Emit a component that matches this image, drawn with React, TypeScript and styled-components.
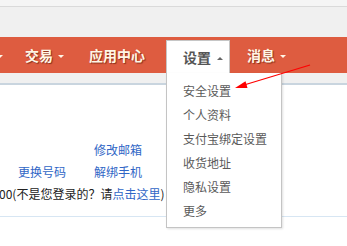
import styled, { createGlobalStyle } from "styled-components";

const GlobalStyle = createGlobalStyle`
  html, body {
    margin: 0;
    padding: 0;
    background: #ffffff;
    font-family: "Noto Sans CJK SC", "Noto Sans", sans-serif;
    overflow: hidden;
  }
`;

const Page = styled.div`
  position: relative;
  width: 347px;
  height: 246px;
  overflow: hidden;
`;

const TopStrip = styled.div`
  height: 6px;
  background: #f5f5f5;
  border-bottom: 1px solid #dadada;
`;

const HeaderSpace = styled.div`
  height: 30px;
  background: #f0f0f0;
`;

const NavBar = styled.nav`
  display: flex;
  align-items: stretch;
  height: 36px;
  background: #de5c40;
`;

const NavItem = styled.div<{ $ml: number }>`
  display: flex;
  align-items: center;
  margin-left: ${({ $ml }) => $ml}px;
  font-size: 14px;
  font-weight: bold;
  line-height: 16px;
  color: #fff6e6;
  text-shadow: 1px 1px 1px rgba(110, 35, 15, 0.75);
  white-space: nowrap;
`;

const Caret = styled.span<{ $up?: boolean; $color: string }>`
  display: inline-block;
  width: 0;
  height: 0;
  margin-left: ${({ $up }) => ($up ? 6 : 5)}px;
  margin-top: 2px;
  border-left: 3px solid transparent;
  border-right: 3px solid transparent;
  ${({ $up, $color }) =>
    $up
      ? `border-bottom: 3px solid ${$color};`
      : `border-top: 3px solid ${$color};`}
`;

const ActiveTab = styled.div<{ $ml: number }>`
  position: relative;
  box-sizing: border-box;
  display: flex;
  align-items: center;
  margin-top: 3px;
  margin-left: ${({ $ml }) => $ml}px;
  height: 33px;
  padding: 0 6px 0 16px;
  background: #ffffff;
  border: 1px solid #c6c6c6;
  border-bottom: none;
  font-size: 14px;
  font-weight: bold;
  line-height: 16px;
  color: #555555;
  white-space: nowrap;
  z-index: 2;
`;

const Dropdown = styled.ul`
  position: absolute;
  top: 100%;
  left: -1px;
  box-sizing: border-box;
  width: 116px;
  margin: 0;
  padding: 6px 0 4px 16px;
  list-style: none;
  background: #ffffff;
  border: 1px solid #c4c4c4;
  border-top: none;
  box-shadow: 1px 1px 2px rgba(0, 0, 0, 0.12);
`;

const DropdownItem = styled.li`
  font-size: 12px;
  font-weight: normal;
  line-height: 24px;
  color: #5a5a5a;
`;

const SubStrip = styled.div`
  height: 10px;
  background: #f0f0f0;
  border-bottom: 2px solid #c9d5df;
`;

const Content = styled.section`
  display: grid;
  grid-template-columns: 76px auto;
  padding: 54px 0 11px 18px;
  border-bottom: 1px solid #d7e6f3;
  font-size: 12px;
  line-height: 22px;
  color: #222222;
`;

const Link = styled.a`
  color: #3066c6;
  text-decoration: none;
`;

const Note = styled.div`
  grid-column: 1 / 3;
  margin-left: -19px;
  white-space: nowrap;
`;

const ArrowLayer = styled.svg`
  position: absolute;
  top: 0;
  left: 0;
  pointer-events: none;
  z-index: 5;
`;

const menu = ["安全设置", "个人资料", "支付宝绑定设置", "收货地址", "隐私设置", "更多"];

export default function App() {
  return (
    <Page>
      <GlobalStyle />
      <TopStrip />
      <HeaderSpace />
      <NavBar>
        <NavItem $ml={-8}>
          <Caret $color="#fff6e6" />
        </NavItem>
        <NavItem $ml={22}>
          交易
          <Caret $color="#fff6e6" />
        </NavItem>
        <NavItem $ml={25}>应用中心</NavItem>
        <ActiveTab $ml={21}>
          设置
          <Caret $up $color="#666666" />
          <Dropdown>
            {menu.map((m) => (
              <DropdownItem key={m}>{m}</DropdownItem>
            ))}
          </Dropdown>
        </ActiveTab>
        <NavItem $ml={17}>
          消息
          <Caret $color="#fff6e6" />
        </NavItem>
      </NavBar>
      <SubStrip />
      <Content>
        <span />
        <Link>修改邮箱</Link>
        <Link>更换号码</Link>
        <Link>解绑手机</Link>
        <Note>
          00(不是您登录的？请<Link>点击这里</Link>)
        </Note>
      </Content>
      <ArrowLayer width="347" height="246" viewBox="0 0 347 246">
        <line x1="310" y1="65" x2="244" y2="85" stroke="#ff0000" strokeWidth="1.2" />
        <polygon points="235,88 245.5,81.2 247.5,87.9" fill="#ff0000" />
      </ArrowLayer>
    </Page>
  );
}
